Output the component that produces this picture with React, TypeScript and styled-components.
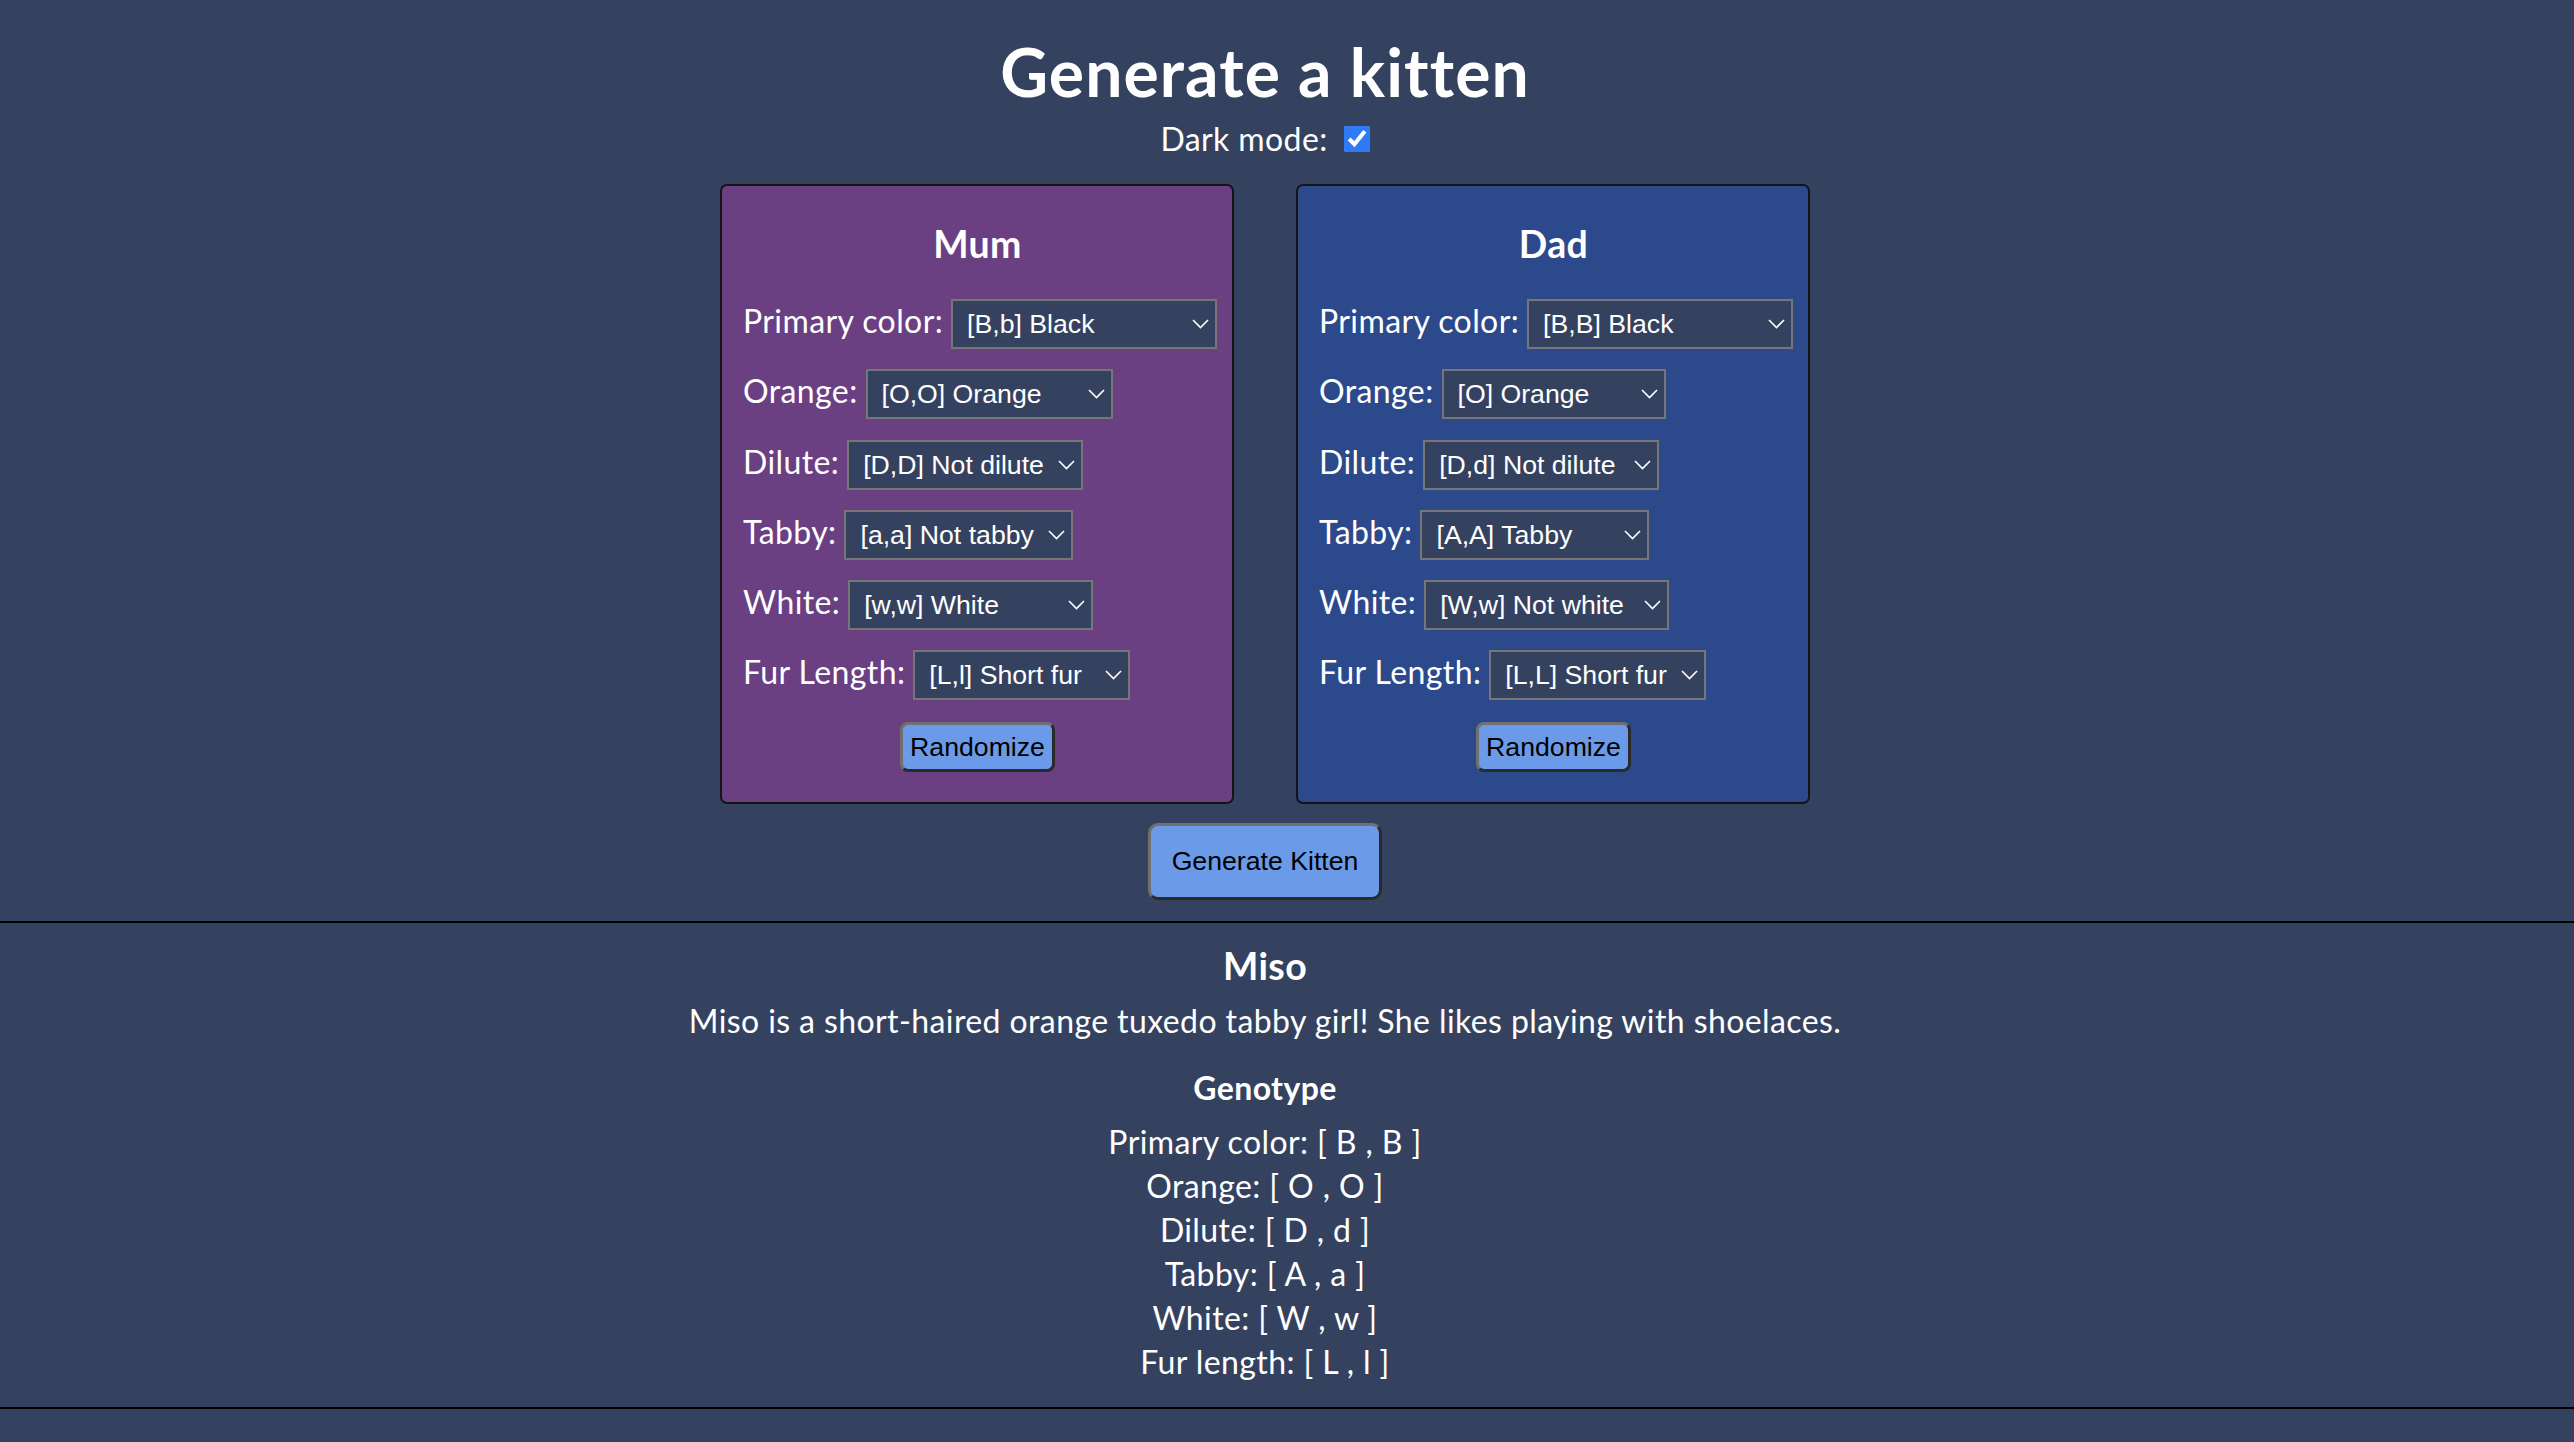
import React from "react";
import styled, { createGlobalStyle } from "styled-components";

const GlobalStyle = createGlobalStyle`
  html, body { margin: 0; padding: 0; background: #35425f; }
  body { color: #ffffff; font-family: Lato, "Noto Sans", sans-serif; letter-spacing: 0.4px; }
  * { box-sizing: border-box; }
`;

const Page = styled.div`
  display: flex;
  flex-direction: column;
`;

const Main = styled.main`
  display: flex;
  flex-direction: column;
  align-items: center;
  padding-right: 44px;
`;

const Title = styled.h1`
  margin: 32px 0 0;
  font-size: 66px;
  line-height: 80px;
  font-weight: 700;
  letter-spacing: 1.1px;
`;

const DarkRow = styled.label`
  margin-top: 7px;
  display: flex;
  align-items: center;
  font-size: 32px;
  line-height: 40px;
`;

const Check = styled.input`
  width: 26px;
  height: 26px;
  margin: 0 0 0 16px;
  accent-color: #2f7bf5;
`;

const Parents = styled.div`
  display: flex;
  gap: 62px;
  margin-top: 25px;
`;

const Panel = styled.section<{ $bg: string }>`
  width: 514px;
  height: 620px;
  display: flex;
  flex-direction: column;
  align-items: flex-start;
  padding: 34.5px 20px 0 21px;
  background: ${(p) => p.$bg};
  border: 2px solid #141414;
  border-radius: 7px;
`;

const PanelTitle = styled.h3`
  align-self: stretch;
  margin: 0 0 32.5px;
  text-align: center;
  font-size: 37.44px;
  line-height: 46px;
  font-weight: 700;
`;

const Fields = styled.div`
  display: flex;
  flex-direction: column;
  align-items: flex-start;
  gap: 20.3px;
`;

const Row = styled.div`
  display: flex;
  align-items: baseline;
  gap: 8px;
  font-size: 32px;
  line-height: 44px;
  white-space: nowrap;
`;

const Label = styled.span`
  flex-shrink: 0;
`;

const SelectWrap = styled.div`
  position: relative;
  display: inline-block;
  flex-shrink: 0;
`;

const Select = styled.select<{ $w: number }>`
  appearance: none;
  -webkit-appearance: none;
  width: ${(p) => p.$w}px;
  height: 50px;
  padding: 0 0 0 14px;
  margin: 0;
  background: #35425f;
  color: #ffffff;
  border: 2px solid #767676;
  border-radius: 0;
  font-family: "Liberation Sans", Arial, sans-serif;
  font-size: 26.67px;
  letter-spacing: 0;
  outline: none;
`;

const Chevron = styled.svg`
  position: absolute;
  right: 8px;
  top: 20px;
  width: 17px;
  height: 10px;
  pointer-events: none;
`;

const Button = styled.button<{ $big?: boolean }>`
  align-self: center;
  flex-shrink: 0;
  height: ${(p) => (p.$big ? 77 : 50)}px;
  padding: 0 ${(p) => (p.$big ? 21 : 7)}px;
  background: #6b9be8;
  color: #000;
  font-family: "Liberation Sans", Arial, sans-serif;
  font-size: 26.67px;
  letter-spacing: 0;
  border-style: solid;
  border-width: 3px;
  border-color: #707070 #2a2a2a #2a2a2a #707070;
  border-radius: ${(p) => (p.$big ? 10 : 8)}px;
  cursor: pointer;
`;

const RandomButton = styled(Button)`
  margin-top: 22px;
`;

const GenerateButton = styled(Button)`
  margin-top: 19px;
`;

const Result = styled.section`
  margin-top: 21px;
  border-top: 2px solid #000;
  border-bottom: 2px solid #000;
  padding: 19.5px 44px 23px 0;
  display: flex;
  flex-direction: column;
  align-items: center;
  text-align: center;
`;

const KittenName = styled.h3`
  margin: 0;
  font-size: 37.44px;
  line-height: 46px;
  font-weight: 700;
`;

const Description = styled.p`
  margin: 10px 0 0;
  font-size: 32px;
  line-height: 44px;
`;

const GenoTitle = styled.h4`
  margin: 23px 0 0;
  font-size: 32px;
  line-height: 44px;
  font-weight: 700;
`;

const GenoList = styled.div`
  margin-top: 10.5px;
  font-size: 32px;
  line-height: 44px;
`;

type Field = { label: string; value: string; width: number };

const mum: Field[] = [
  { label: "Primary color:", value: "[B,b] Black", width: 266 },
  { label: "Orange:", value: "[O,O] Orange", width: 247 },
  { label: "Dilute:", value: "[D,D] Not dilute", width: 236 },
  { label: "Tabby:", value: "[a,a] Not tabby", width: 229 },
  { label: "White:", value: "[w,w] White", width: 245 },
  { label: "Fur Length:", value: "[L,l] Short fur", width: 217 },
];

const dad: Field[] = [
  { label: "Primary color:", value: "[B,B] Black", width: 266 },
  { label: "Orange:", value: "[O] Orange", width: 224 },
  { label: "Dilute:", value: "[D,d] Not dilute", width: 236 },
  { label: "Tabby:", value: "[A,A] Tabby", width: 229 },
  { label: "White:", value: "[W,w] Not white", width: 245 },
  { label: "Fur Length:", value: "[L,L] Short fur", width: 217 },
];

const genotype = [
  "Primary color: [ B , B ]",
  "Orange: [ O , O ]",
  "Dilute: [ D , d ]",
  "Tabby: [ A , a ]",
  "White: [ W , w ]",
  "Fur length: [ L , l ]",
];

function ParentPanel({ name, bg, fields }: { name: string; bg: string; fields: Field[] }) {
  return (
    <Panel $bg={bg}>
      <PanelTitle>{name}</PanelTitle>
      <Fields>
        {fields.map((f) => (
          <Row key={f.label}>
            <Label>{f.label}</Label>
            <SelectWrap>
              <Select $w={f.width} defaultValue={f.value}>
                <option value={f.value}>{f.value}</option>
              </Select>
              <Chevron viewBox="0 0 17 10">
                <polyline points="1,1 8.5,8.5 16,1" fill="none" stroke="#fff" strokeWidth="1.6" />
              </Chevron>
            </SelectWrap>
          </Row>
        ))}
      </Fields>
      <RandomButton>Randomize</RandomButton>
    </Panel>
  );
}

export default function App() {
  return (
    <Page>
      <GlobalStyle />
      <Main>
        <Title>Generate a kitten</Title>
        <DarkRow>
          Dark mode:
          <Check type="checkbox" defaultChecked />
        </DarkRow>
        <Parents>
          <ParentPanel name="Mum" bg="#6b4083" fields={mum} />
          <ParentPanel name="Dad" bg="#2c4a8b" fields={dad} />
        </Parents>
        <GenerateButton $big>Generate Kitten</GenerateButton>
      </Main>
      <Result>
        <KittenName>Miso</KittenName>
        <Description>
          Miso is a short-haired orange tuxedo tabby girl! She likes playing with shoelaces.
        </Description>
        <GenoTitle>Genotype</GenoTitle>
        <GenoList>
          {genotype.map((g) => (
            <div key={g}>{g}</div>
          ))}
        </GenoList>
      </Result>
    </Page>
  );
}
